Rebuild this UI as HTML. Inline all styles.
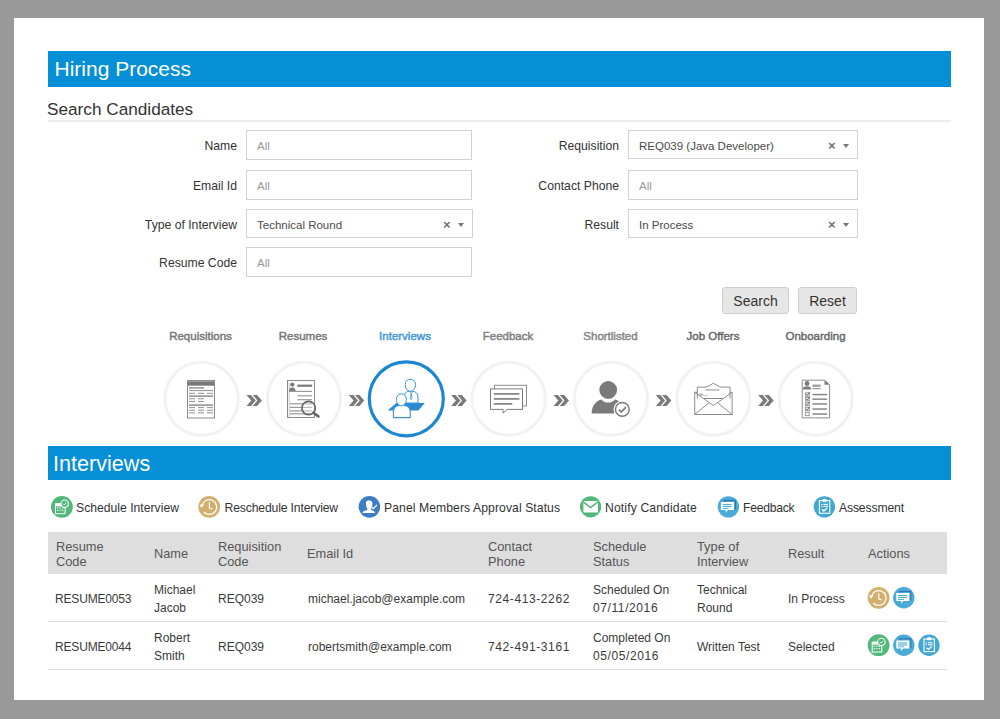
<!DOCTYPE html>
<html><head><meta charset="utf-8">
<style>
*{box-sizing:border-box;margin:0;padding:0}
html,body{width:1000px;height:719px;overflow:hidden;background:#999;font-family:"Liberation Sans",sans-serif;color:#333}
.panel{position:absolute;left:14px;top:18px;width:970px;height:682px;background:#fff}
.a{position:absolute;white-space:nowrap}
.bar{position:absolute;left:48px;width:903px;background:#058fd6;color:#fff}
.lbl{position:absolute;font-size:12.2px;color:#333;text-align:right;white-space:nowrap;line-height:14px}
.inp{position:absolute;border:1px solid #d2d2d2;background:#fff;height:30px}
.inp span{position:absolute;left:10px;top:8px;font-size:11.5px;color:#999;line-height:14px}
.sel{position:absolute;border:1px solid #d2d2d2;background:#fff;height:29px}
.sel span{position:absolute;left:10px;top:7.5px;font-size:11.5px;color:#4a4a4a;line-height:14px}
.sel .x{position:absolute;left:auto;right:21.5px;top:7.5px;font-size:13px;color:#707070;font-weight:bold}
.sel .c{position:absolute;right:8px;top:13px;width:0;height:0;border-left:3.5px solid transparent;border-right:3.5px solid transparent;border-top:4px solid #777}
.btn{position:absolute;top:287px;height:27px;background:#e6e6e6;border:1px solid #cfcfcf;border-radius:3px;font-size:14px;color:#333;text-align:center;line-height:27px}
.step{position:absolute;top:329px;font-size:11.5px;font-weight:normal;-webkit-text-stroke:0.45px currentColor;color:#777;white-space:nowrap;text-align:center;width:100px;line-height:14px}
.leg{position:absolute;top:500.5px;font-size:12.2px;color:#333;white-space:nowrap;line-height:14px}
.th{position:absolute;font-size:12.8px;color:#555;line-height:14.5px;white-space:nowrap;margin-top:1px}
.td{position:absolute;font-size:12px;color:#3a3a3a;line-height:17.5px;white-space:nowrap;margin-top:1px}
.num{letter-spacing:0.6px}
.rc{letter-spacing:-0.17px}
</style></head><body>
<div class="panel"></div>

<!-- Hiring Process bar -->
<div class="bar" style="top:51px;height:36px"></div>
<div class="a" style="left:54.5px;top:57px;font-size:21px;color:#fff;line-height:24px">Hiring Process</div>

<div class="a" style="left:47px;top:99px;font-size:17.2px;color:#333;line-height:20px">Search Candidates</div>
<div class="a" style="left:48px;top:120px;width:903px;height:2px;background:#ededed"></div>

<!-- form -->
<div class="lbl" style="right:763px;top:139px">Name</div>
<div class="inp" style="left:246px;top:130px;width:226px"><span>All</span></div>
<div class="lbl" style="right:763px;top:179px">Email Id</div>
<div class="inp" style="left:246px;top:170px;width:226px"><span>All</span></div>
<div class="lbl" style="right:763px;top:218px">Type of Interview</div>
<div class="sel" style="left:246px;top:209px;width:227px"><span>Technical Round</span><span class="x">&#215;</span><i class="c"></i></div>
<div class="lbl" style="right:763px;top:256px">Resume Code</div>
<div class="inp" style="left:246px;top:247px;width:226px"><span>All</span></div>

<div class="lbl" style="right:381px;top:139px">Requisition</div>
<div class="sel" style="left:628px;top:130px;width:230px"><span>REQ039 (Java Developer)</span><span class="x">&#215;</span><i class="c"></i></div>
<div class="lbl" style="right:381px;top:179px">Contact Phone</div>
<div class="inp" style="left:628px;top:170px;width:230px"><span>All</span></div>
<div class="lbl" style="right:381px;top:218px">Result</div>
<div class="sel" style="left:628px;top:209px;width:230px"><span>In Process</span><span class="x">&#215;</span><i class="c"></i></div>

<div class="btn" style="left:722px;width:67px">Search</div>
<div class="btn" style="left:798px;width:59px">Reset</div>

<!-- steps -->
<div class="step" style="left:150.5px">Requisitions</div>
<div class="step" style="left:253px">Resumes</div>
<div class="step" style="left:355px;color:#3d96d8">Interviews</div>
<div class="step" style="left:458px;color:#7e7e7e">Feedback</div>
<div class="step" style="left:560.5px;color:#858585">Shortlisted</div>
<div class="step" style="left:663px;color:#686868">Job Offers</div>
<div class="step" style="left:765.5px;color:#6a6a6a">Onboarding</div>

<svg class="a" style="left:0;top:0" width="1000" height="719" id="steps">
<circle cx="201.60" cy="398.8" r="36.6" fill="none" stroke="#f2f2f2" stroke-width="3.1"/>
<circle cx="303.95" cy="398.8" r="36.6" fill="none" stroke="#f2f2f2" stroke-width="3.1"/>
<circle cx="406.30" cy="398.8" r="37" fill="none" stroke="#1b87d2" stroke-width="3.2"/>
<circle cx="508.65" cy="398.8" r="36.6" fill="none" stroke="#f2f2f2" stroke-width="3.1"/>
<circle cx="611.00" cy="398.8" r="36.6" fill="none" stroke="#f2f2f2" stroke-width="3.1"/>
<circle cx="713.35" cy="398.8" r="36.6" fill="none" stroke="#f2f2f2" stroke-width="3.1"/>
<circle cx="815.70" cy="398.8" r="36.6" fill="none" stroke="#f2f2f2" stroke-width="3.1"/>
<polygon points="246.42,395 250.92,395 255.72,400.5 250.92,406 246.42,406 251.22,400.5" fill="#7a7a7a"/>
<polygon points="252.62,395 257.12,395 261.92,400.5 257.12,406 252.62,406 257.42,400.5" fill="#7a7a7a"/>
<polygon points="348.77,395 353.27,395 358.07,400.5 353.27,406 348.77,406 353.57,400.5" fill="#7a7a7a"/>
<polygon points="354.97,395 359.47,395 364.27,400.5 359.47,406 354.97,406 359.77,400.5" fill="#7a7a7a"/>
<polygon points="451.12,395 455.62,395 460.42,400.5 455.62,406 451.12,406 455.92,400.5" fill="#7a7a7a"/>
<polygon points="457.32,395 461.82,395 466.62,400.5 461.82,406 457.32,406 462.12,400.5" fill="#7a7a7a"/>
<polygon points="553.48,395 557.98,395 562.77,400.5 557.98,406 553.48,406 558.27,400.5" fill="#7a7a7a"/>
<polygon points="559.68,395 564.18,395 568.98,400.5 564.18,406 559.68,406 564.48,400.5" fill="#7a7a7a"/>
<polygon points="655.82,395 660.32,395 665.12,400.5 660.32,406 655.82,406 660.62,400.5" fill="#7a7a7a"/>
<polygon points="662.02,395 666.52,395 671.32,400.5 666.52,406 662.02,406 666.82,400.5" fill="#7a7a7a"/>
<polygon points="758.17,395 762.67,395 767.47,400.5 762.67,406 758.17,406 762.97,400.5" fill="#7a7a7a"/>
<polygon points="764.38,395 768.88,395 773.67,400.5 768.88,406 764.38,406 769.17,400.5" fill="#7a7a7a"/>
<rect x="187.5" y="380.5" width="27" height="37.5" fill="#fff" stroke="#8c8c8c" stroke-width="1"/>
<rect x="188" y="381.3" width="26" height="4.4" fill="#7a7a7a"/>
<rect x="189" y="387.1" width="15" height="1.6" fill="#9a9a9a"/>
<rect x="189" y="390.0" width="24" height="1.1" fill="#9a9a9a"/>
<rect x="189" y="392.8" width="6" height="1.1" fill="#9a9a9a"/>
<rect x="198" y="392.8" width="6" height="1.1" fill="#9a9a9a"/>
<rect x="207" y="392.8" width="6" height="1.1" fill="#9a9a9a"/>
<rect x="189" y="395.3" width="24" height="1.7" fill="#9a9a9a"/>
<rect x="189" y="398.2" width="6" height="1.1" fill="#9a9a9a"/>
<rect x="198" y="398.2" width="6" height="1.1" fill="#9a9a9a"/>
<rect x="189" y="400.9" width="6" height="1.1" fill="#9a9a9a"/>
<rect x="198" y="400.9" width="6" height="1.1" fill="#9a9a9a"/>
<rect x="189" y="404.3" width="24" height="1.7" fill="#9a9a9a"/>
<rect x="189" y="407.0" width="6" height="1.1" fill="#9a9a9a"/>
<rect x="198" y="407.0" width="6" height="1.1" fill="#9a9a9a"/>
<rect x="207" y="407.0" width="6" height="1.1" fill="#9a9a9a"/>
<rect x="189" y="409.7" width="6" height="1.1" fill="#9a9a9a"/>
<rect x="198" y="409.7" width="6" height="1.1" fill="#9a9a9a"/>
<rect x="207" y="409.7" width="6" height="1.1" fill="#9a9a9a"/>
<rect x="189" y="412.3" width="6" height="1.1" fill="#9a9a9a"/>
<rect x="198" y="412.3" width="6" height="1.1" fill="#9a9a9a"/>
<rect x="207" y="412.3" width="6" height="1.1" fill="#9a9a9a"/>
<rect x="287.5" y="380.5" width="27" height="37" fill="#fff" stroke="#8c8c8c" stroke-width="1"/>
<line x1="289.2" y1="382" x2="289.2" y2="417" stroke="#bbb" stroke-width="0.8"/>
<circle cx="292.3" cy="384.6" r="2.1" fill="#7a7a7a"/>
<path d="M289,391.8 Q289,387.6 292.3,387.6 Q295.6,387.6 295.6,391.8 Z" fill="#7a7a7a"/>
<rect x="297.4" y="384.6" width="14.8" height="2.2" fill="#7a7a7a"/>
<rect x="290" y="390.8" width="22" height="1.2" fill="#9a9a9a"/>
<rect x="297.4" y="395.2" width="14.6" height="1.2" fill="#9a9a9a"/>
<rect x="297.4" y="399.1" width="14.6" height="1.2" fill="#9a9a9a"/>
<rect x="290" y="403.2" width="22" height="1.2" fill="#9a9a9a"/>
<rect x="290" y="406.8" width="22" height="1.2" fill="#9a9a9a"/>
<rect x="290" y="410.3" width="22" height="1.2" fill="#9a9a9a"/>
<rect x="290" y="413.2" width="22" height="1.2" fill="#9a9a9a"/>
<circle cx="308.6" cy="408" r="6.7" fill="rgba(255,255,255,0.35)" stroke="#666" stroke-width="1.7"/>
<line x1="313.4" y1="412.8" x2="318.4" y2="416.4" stroke="#666" stroke-width="2.6" stroke-linecap="round"/>
<polygon points="387.6,410.6 396.3,402.9 424.8,402.9 418.3,410.6" fill="#2a8ad4"/>
<path d="M404.2,403 V397 Q404.2,391.6 409.2,391.2 H412.2 Q417.8,391.6 418,397 V403 Z" fill="#fff" stroke="#3a94d8" stroke-width="1"/>
<path d="M409.8,391.4 L411,393.6 L410.4,398.6 L411.2,399.8 L412,398.6 L411.4,393.6 L412.6,391.4" fill="none" stroke="#3a94d8" stroke-width="0.8"/>
<path d="M410.4,379.3 C413.6,379.3 415.6,381.6 415.6,384.6 C415.6,388 413.4,391.2 410.4,391.2 C407.4,391.2 405.2,388 405.2,384.6 C405.2,381.6 407.2,379.3 410.4,379.3 Z" fill="#fff" stroke="#3a94d8" stroke-width="1"/>
<path d="M393.4,417.6 V411.6 Q393.6,405.6 399.4,405.4 H404.4 Q410,405.6 410.2,411.6 V417.6 Z" fill="#fff" stroke="#3a94d8" stroke-width="1.1"/>
<path d="M401.4,393.8 C404.6,393.8 406.4,396.2 406.4,399.2 C406.4,402.6 404.2,405.8 401.4,405.8 C398.6,405.8 396.4,402.6 396.4,399.2 C396.4,396.2 398.2,393.8 401.4,393.8 Z" fill="#fff" stroke="#3a94d8" stroke-width="1"/>
<rect x="494.5" y="385.3" width="32" height="20.6" fill="#fff" stroke="#8c8c8c" stroke-width="1"/>
<path d="M490.5,388.9 H522.5 V409.4 H507.3 L503,413.2 V409.4 H490.5 Z" fill="#fff" stroke="#7a7a7a" stroke-width="1"/>
<rect x="493.8" y="393.1" width="25.6" height="1.6" fill="#7a7a7a"/>
<rect x="493.8" y="398.1" width="25.6" height="1.6" fill="#7a7a7a"/>
<rect x="493.8" y="403.1" width="18.5" height="1.6" fill="#7a7a7a"/>
<path d="M591.6,413.4 C592,405.5 595.5,401.2 601.3,399.4 C603.5,401.6 605.8,402.6 608.2,402.6 C610.6,402.6 612.9,401.6 615.1,399.4 C620.9,401.2 624.4,405.5 624.8,413.4 Z" fill="#7a7a7a"/>
<circle cx="608.2" cy="390" r="9.6" fill="#7a7a7a" stroke="#fff" stroke-width="1.4"/>
<circle cx="622.3" cy="409.4" r="8.8" fill="#fff"/>
<circle cx="622.3" cy="409.4" r="6.9" fill="#fff" stroke="#7a7a7a" stroke-width="1.5"/>
<polyline points="618.9,409.6 621.3,412 625.9,407.1" fill="none" stroke="#7a7a7a" stroke-width="1.7"/>
<rect x="694.7" y="392.3" width="37.4" height="22.2" fill="#fff" stroke="#8c8c8c" stroke-width="1"/>
<path d="M697.3,398.5 V387.1 H706.4 L713.4,383.3 L720.4,387.1 H730 V398.5" fill="#fff" stroke="#8c8c8c" stroke-width="1"/>
<polyline points="694.7,392.3 713.4,405.5 732.1,392.3" fill="none" stroke="#8c8c8c" stroke-width="1"/>
<line x1="704" y1="398.5" x2="722.7" y2="398.5" stroke="#8c8c8c" stroke-width="1"/>
<line x1="694.7" y1="414.5" x2="708.7" y2="403.1" fill="none" stroke="#8c8c8c" stroke-width="1"/>
<line x1="732.1" y1="414.5" x2="718" y2="403.1" fill="none" stroke="#8c8c8c" stroke-width="1"/>
<rect x="705.5" y="389.3" width="14" height="1.3" fill="#aaa"/>
<rect x="699" y="393.6" width="4" height="1.2" fill="#aaa"/>
<rect x="700" y="395.2" width="8" height="0.8" fill="#bbb"/>
<path d="M802.2,380.2 H824.5 L829.6,384.8 V417.9 H802.2 Z" fill="#fff" stroke="#8c8c8c" stroke-width="1"/>
<path d="M824.5,380.2 V384.8 H829.6 Z" fill="#7a7a7a"/>
<circle cx="807" cy="383.5" r="2.4" fill="#7a7a7a"/>
<path d="M802.8,389.6 Q802.8,386.2 807,386.2 Q811.2,386.2 811.2,389.6 Z" fill="#7a7a7a"/>
<rect x="812.4" y="384.6" width="8.3" height="2.2" fill="#9a9a9a"/>
<rect x="812.4" y="388" width="8.3" height="1.2" fill="#9a9a9a"/>
<rect x="805.6" y="392.8" width="3.6" height="3.4" fill="none" stroke="#8a8a8a" stroke-width="0.9"/>
<polyline points="806.2,394.2 807.2,395.3 809.8,392.2" fill="none" stroke="#666" stroke-width="1"/>
<rect x="812.4" y="393.79999999999995" width="14.7" height="1.5" fill="#888"/>
<rect x="805.6" y="397.4" width="3.6" height="3.4" fill="none" stroke="#8a8a8a" stroke-width="0.9"/>
<polyline points="806.2,398.8 807.2,399.9 809.8,396.8" fill="none" stroke="#666" stroke-width="1"/>
<rect x="812.4" y="398.4" width="14.7" height="1.5" fill="#888"/>
<rect x="805.6" y="402.2" width="3.6" height="3.4" fill="none" stroke="#8a8a8a" stroke-width="0.9"/>
<polyline points="806.2,403.6 807.2,404.7 809.8,401.6" fill="none" stroke="#666" stroke-width="1"/>
<rect x="812.4" y="403.2" width="14.7" height="1.5" fill="#888"/>
<rect x="805.6" y="407.3" width="3.6" height="3.4" fill="none" stroke="#8a8a8a" stroke-width="0.9"/>
<polyline points="806.2,408.7 807.2,409.8 809.8,406.7" fill="none" stroke="#666" stroke-width="1"/>
<rect x="812.4" y="408.29999999999995" width="14.7" height="1.5" fill="#888"/>
<rect x="805.6" y="412.3" width="3.6" height="3.4" fill="none" stroke="#8a8a8a" stroke-width="0.9"/>
<rect x="812.4" y="413.29999999999995" width="14.7" height="1.5" fill="#888"/>
</svg>

<!-- Interviews bar -->
<div class="bar" style="top:446px;height:34px"></div>
<div class="a" style="left:53px;top:452px;font-size:21.6px;color:#fff;line-height:24px">Interviews</div>

<!-- legend -->
<div class="leg" style="left:76px">Schedule Interview</div>
<div class="leg" style="left:224.5px;letter-spacing:-0.15px">Reschedule Interview</div>
<div class="leg" style="left:384px;letter-spacing:0.07px">Panel Members Approval Status</div>
<div class="leg" style="left:605px;letter-spacing:0.12px">Notify Candidate</div>
<div class="leg" style="left:743px;letter-spacing:-0.28px">Feedback</div>
<div class="leg" style="left:839px;letter-spacing:-0.15px">Assessment</div>

<!-- table -->
<div class="a" style="left:48px;top:532px;width:899px;height:42px;background:#dedede"></div>
<div class="a" style="left:48px;top:621px;width:899px;height:1px;background:#ddd"></div>
<div class="a" style="left:48px;top:669px;width:899px;height:1px;background:#e0e0e0"></div>

<div class="th" style="left:56px;top:539px">Resume<br>Code</div>
<div class="th" style="left:154px;top:546px">Name</div>
<div class="th" style="left:218px;top:539px">Requisition<br>Code</div>
<div class="th" style="left:307px;top:546px">Email Id</div>
<div class="th" style="left:488px;top:539px">Contact<br>Phone</div>
<div class="th" style="left:593px;top:539px">Schedule<br>Status</div>
<div class="th" style="left:697px;top:539px">Type of<br>Interview</div>
<div class="th" style="left:788px;top:546px">Result</div>
<div class="th" style="left:868px;top:546px">Actions</div>

<div class="td" style="left:55px;top:590px"><span class="rc">RESUME0053</span></div>
<div class="td" style="left:154px;top:581px">Michael<br>Jacob</div>
<div class="td" style="left:218px;top:590px">REQ039</div>
<div class="td" style="left:308px;top:590px">michael.jacob@example.com</div>
<div class="td" style="left:488px;top:590px"><span class="num">724-413-2262</span></div>
<div class="td" style="left:593px;top:581px">Scheduled On<br><span class="num">07/11/2016</span></div>
<div class="td" style="left:697px;top:581px">Technical<br>Round</div>
<div class="td" style="left:788px;top:590px">In Process</div>

<div class="td" style="left:55px;top:638px"><span class="rc">RESUME0044</span></div>
<div class="td" style="left:154px;top:629px">Robert<br>Smith</div>
<div class="td" style="left:218px;top:638px">REQ039</div>
<div class="td" style="left:308px;top:638px">robertsmith@example.com</div>
<div class="td" style="left:488px;top:638px"><span class="num">742-491-3161</span></div>
<div class="td" style="left:593px;top:629px">Completed On<br><span class="num">05/05/2016</span></div>
<div class="td" style="left:697px;top:638px">Written Test</div>
<div class="td" style="left:788px;top:638px">Selected</div>

<svg class="a" style="left:0;top:0" width="1000" height="719" id="icons">
<defs><g id="i_cal"><circle r="10.9" fill="#52b77a"/>
<rect x="-6.4" y="-3.2" width="9.6" height="10" fill="none" stroke="#fff" stroke-width="1"/>
<rect x="-6.4" y="-3.2" width="9.6" height="2.6" fill="#fff"/>
<g fill="#fff"><rect x="-5" y="0.6" width="1.5" height="1"/><rect x="-2.5" y="0.6" width="1.5" height="1"/><rect x="0" y="0.6" width="1.5" height="1"/>
<rect x="-5" y="3" width="1.5" height="1"/><rect x="-2.5" y="3" width="1.5" height="1"/><rect x="0" y="3" width="1.5" height="1"/></g>
<circle cx="2.8" cy="-3.2" r="3.7" fill="#52b77a" stroke="#fff" stroke-width="1.1"/>
<polyline points="1.2,-3.2 2.4,-2 4.4,-4.4" fill="none" stroke="#fff" stroke-width="0.9"/></g><g id="i_clock"><circle r="10.9" fill="#d4b06e"/>
<path d="M-5.4,5.2 A7.4,7.4 0 1 0 -7.2,-1.2" fill="none" stroke="#fff" stroke-width="1.3"/>
<polygon points="-9.6,-2.2 -5.2,-2.6 -7.6,1.2" fill="#fff"/>
<polyline points="0.2,-4.5 0.2,1.3 3.2,2.2" fill="none" stroke="#fff" stroke-width="1.1"/></g><g id="i_user"><circle r="10.8" fill="#3d7dc2"/>
<path d="M-1.2,-6.3 C-3.4,-6.3 -3.6,-4 -3.4,-2.2 C-3.2,0 -2.5,1.2 -2,1.8 L-2,3.2 C-4.5,3.8 -7,4.5 -7,6.2 L5.7,6.2 C5.7,4.8 3.8,3.9 1.6,3.2 L1.6,1.8 C2.1,1.2 2.8,0 3,-2.2 C3.2,-4 3,-6.3 -1.2,-6.3 Z" fill="#fff"/>
<polyline points="2.4,0.6 3.8,1.8 7.6,-1.8" fill="none" stroke="#fff" stroke-width="1.3"/></g><g id="i_mail"><circle r="10.6" fill="#52b77a"/>
<rect x="-7.2" y="-5.8" width="14.6" height="11.4" fill="#fff"/>
<polyline points="-7.4,-5 0,0.8 7.4,-5" fill="none" stroke="#52b77a" stroke-width="1.5"/></g><g id="i_chat"><circle r="10.7" fill="#4aabd6"/>
<rect x="-4" y="-6.4" width="11" height="8.4" fill="none" stroke="#2d6fb5" stroke-width="1"/>
<path d="M-7.5,-4.8 H5.6 V3.2 H-0.6 L-2.6,6 V3.2 H-7.5 Z" fill="#fff"/>
<g fill="#4aabd6"><rect x="-5.8" y="-2.8" width="9" height="1.1"/><rect x="-5.8" y="-0.8" width="9" height="1.1"/><rect x="-5.8" y="1.2" width="6" height="0.9"/></g></g><g id="i_clip"><circle r="10.7" fill="#43a7d3"/>
<rect x="-5" y="-6.2" width="10.4" height="12.6" fill="none" stroke="#fff" stroke-width="1.1"/>
<path d="M-2.2,-6.4 Q-2.2,-8.2 0.2,-8.2 Q2.6,-8.2 2.6,-6.4 L2.2,-5 H-1.8 Z" fill="#fff"/>
<g fill="#fff"><rect x="-3.2" y="-3" width="1.2" height="1.1"/><rect x="-1" y="-3" width="4.6" height="1.1"/>
<rect x="-3.2" y="-1" width="1.2" height="1.1"/><rect x="-1" y="-1" width="4.6" height="1.1"/></g>
<polyline points="-2.4,2.6 -0.6,4.2 2.8,1" fill="none" stroke="#fff" stroke-width="1.3"/></g></defs>
<use href="#i_cal" x="61.9" y="506.9"/>
<use href="#i_clock" x="209.2" y="506.85"/>
<use href="#i_user" x="369.4" y="506.85"/>
<use href="#i_mail" x="590.6" y="506.85"/>
<use href="#i_chat" x="728.4" y="506.85"/>
<use href="#i_clip" x="824.4" y="506.85"/>
<use href="#i_clock" x="878.6" y="597.8"/>
<use href="#i_chat" x="903.8" y="597.8"/>
<use href="#i_cal" x="878.6" y="645.2"/>
<use href="#i_chat" x="903.8" y="645.2"/>
<use href="#i_clip" x="929" y="645.2"/>
</svg>
</body></html>
